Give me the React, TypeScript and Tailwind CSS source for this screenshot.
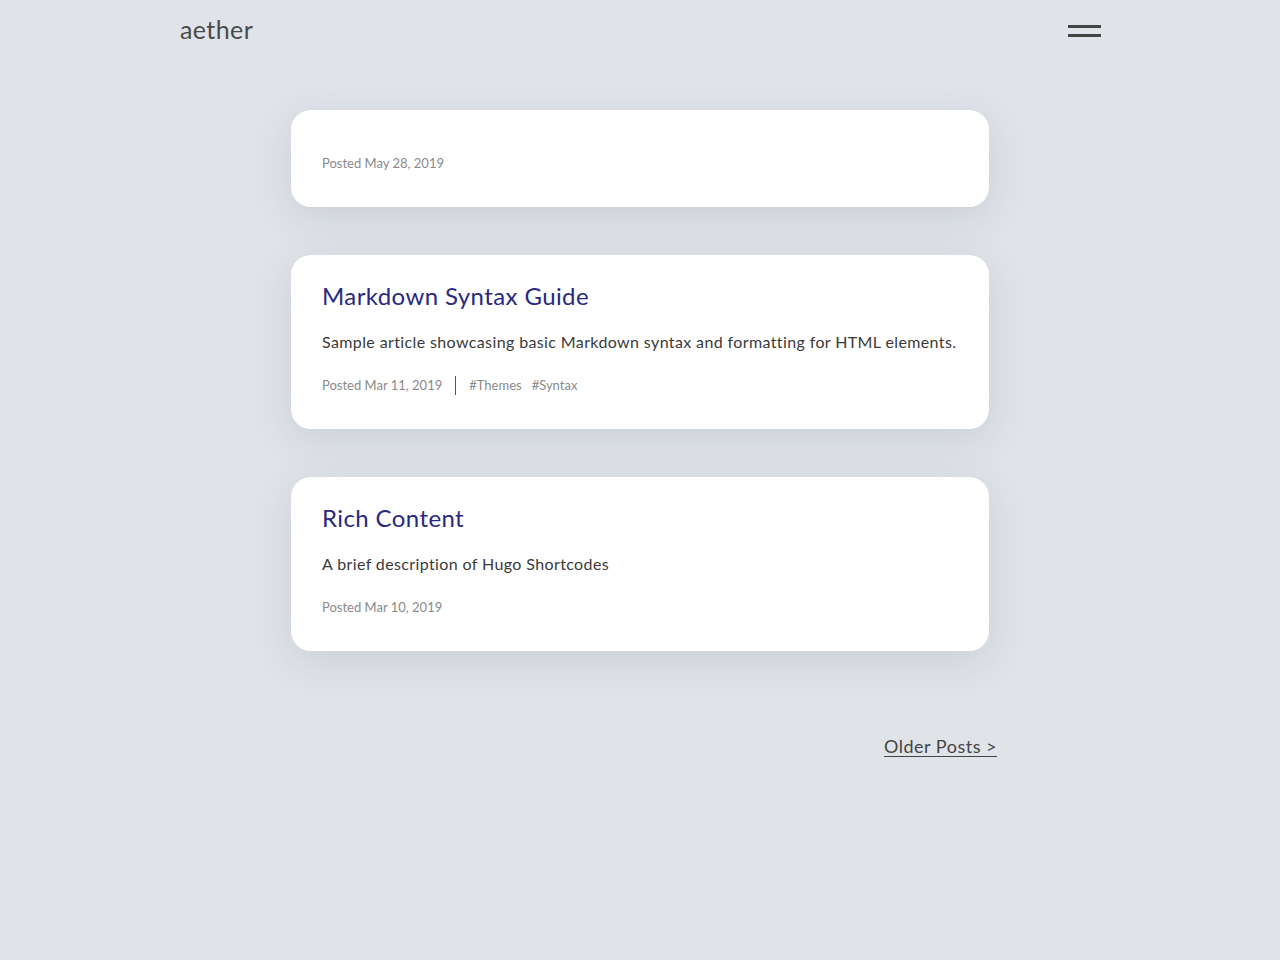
import React from "react";

interface Post {
  title?: string;
  summary?: string;
  date: string;
  tags?: string[];
}

const posts: Post[] = [
  { date: "May 28, 2019" },
  {
    title: "Markdown Syntax Guide",
    summary: "Sample article showcasing basic Markdown syntax and formatting for HTML elements.",
    date: "Mar 11, 2019",
    tags: ["Themes", "Syntax"],
  },
  {
    title: "Rich Content",
    summary: "A brief description of Hugo Shortcodes",
    date: "Mar 10, 2019",
  },
];

const PostCard = ({ post }: { post: Post }) => (
  <div
    className={`bg-white rounded-[20px] pl-[31px] pr-[32px] pb-[34px] shadow-[0_10px_40px_rgba(60,70,90,0.13)] ${
      post.title ? "pt-[25px]" : "pt-[43px]"
    }`}
  >
    {post.title && (
      <h2 className="text-[24px] leading-[32px] tracking-[0.4px] text-[#29297f] mb-[18px]">{post.title}</h2>
    )}
    {post.summary && (
      <p className="text-[16px] leading-[24px] tracking-[0.38px] text-[#3a3a3a] mb-[21px]">{post.summary}</p>
    )}
    <div className="flex items-center text-[13px] leading-[20px] text-[#8a8a8a]">
      <span>Posted {post.date}</span>
      {post.tags && (
        <>
          <span className="w-px h-[19px] bg-[#555] mx-[13px]" />
          {post.tags.map((tag) => (
            <span key={tag} className="mr-[10px]">
              #{tag}
            </span>
          ))}
        </>
      )}
    </div>
  </div>
);

const App = () => {
  return (
    <div
      className="min-h-[960px] bg-[#e0e4e9] text-[#444]"
      style={{ fontFamily: "Lato, 'Noto Sans', sans-serif" }}
    >
      <header className="w-[922px] mx-auto flex items-center justify-between pt-[15px]">
        <span className="text-[25px] leading-[32px] text-[#4a4a4a] tracking-[0.4px] ml-[1px] -mt-[2px]">aether</span>
        <button className="flex flex-col gap-[6px] w-[33px] mt-[1px]">
          <span className="h-[3px] w-full bg-[#444]" />
          <span className="h-[3px] w-full bg-[#444]" />
        </button>
      </header>

      <main className="w-[698px] mx-auto mt-[65px] flex flex-col gap-[48px]">
        {posts.map((post) => (
          <PostCard key={post.date} post={post} />
        ))}
      </main>

      <div className="w-[706px] ml-[291px] flex justify-end mt-[83px]">
        <a
          className="text-[18px] leading-[24px] tracking-[0.5px] text-[#444] underline underline-offset-[3px] decoration-1"
          href="#"
        >
          Older Posts &gt;
        </a>
      </div>
    </div>
  );
};

export default App;
